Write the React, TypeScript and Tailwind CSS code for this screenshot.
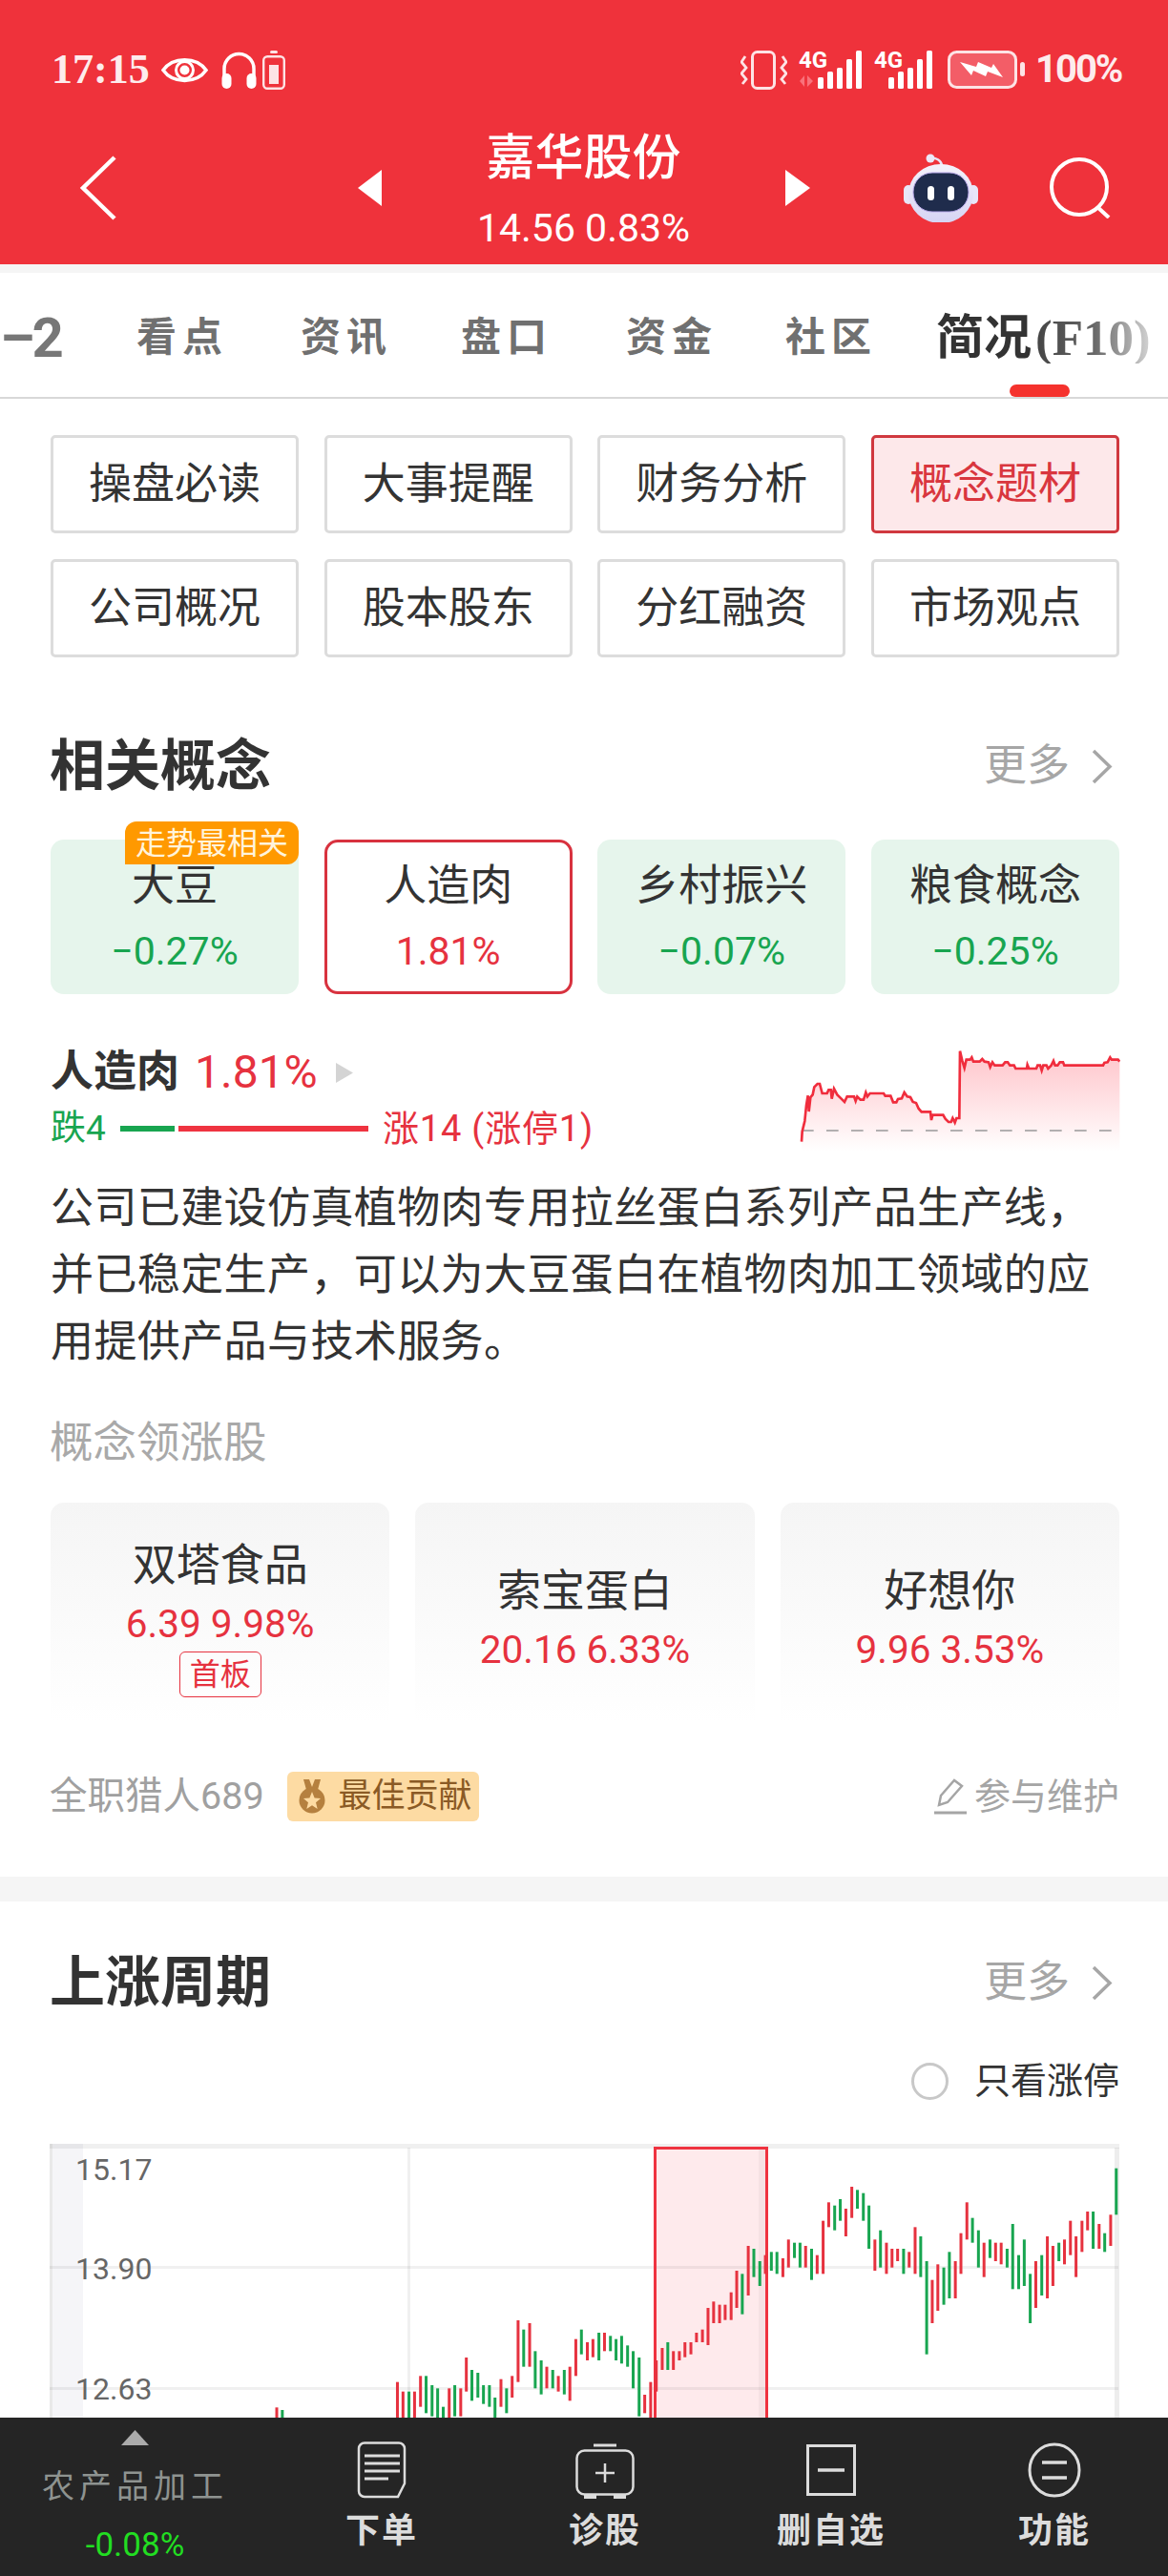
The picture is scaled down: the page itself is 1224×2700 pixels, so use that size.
const navTabs = [
  { label: '看点', gap: 'ml-[81px]' },
  { label: '资讯', gap: 'ml-[82px]' },
  { label: '盘口', gap: 'ml-[78px]' },
  { label: '资金', gap: 'ml-[83px]' },
  { label: '社区', gap: 'ml-[77px]' },
]

const menuItems = ['操盘必读', '大事提醒', '财务分析', '概念题材', '公司概况', '股本股东', '分红融资', '市场观点']

const concepts = [
  { name: '大豆', value: '−0.27%', up: false, badge: true },
  { name: '人造肉', value: '1.81%', up: true, badge: false },
  { name: '乡村振兴', value: '−0.07%', up: false, badge: false },
  { name: '粮食概念', value: '−0.25%', up: false, badge: false },
]

const leaders = [
  { name: '双塔食品', value: '6.39 9.98%', tag: '首板' },
  { name: '索宝蛋白', value: '20.16 6.33%', tag: '' },
  { name: '好想你', value: '9.96 3.53%', tag: '' },
]

// sparkline points, traced at 3x
const sparkLine =
  '120,410 122,378 130,345 135,295 140,265 143,315 148,270 155,262 160,238 170,228 177,228 185,258 200,258 205,247 212,247 215,275 222,243 232,262 245,275 255,285 263,268 285,268 290,282 295,268 305,278 315,278 322,255 327,268 335,258 378,258 383,266 400,266 408,286 418,286 423,276 435,274 443,255 452,268 462,270 470,285 480,288 488,306 497,316 525,316 528,342 532,326 565,326 572,338 582,348 590,348 595,336 602,350 607,336 616,336 618,125 625,155 632,178 638,152 650,152 655,145 660,158 680,158 688,150 695,158 708,160 713,175 720,160 727,170 752,170 760,160 768,160 775,170 788,170 793,180 828,180 830,168 835,180 858,180 862,170 870,170 875,186 880,170 890,170 895,180 905,170 912,156 917,170 925,170 932,160 942,160 946,170 1068,170 1072,162 1082,160 1090,145 1095,152 1115,152 1120,158'

type Bar = [number, number, number, 'r' | 'g']

// [x, top, bottom, colour] as read off the two chart crops
const leftBars: Bar[] = [
  [743, 910, 945, 'r'], [758, 918, 945, 'g'], [1067, 830, 945, 'r'], [1082, 860, 945, 'r'], [1098, 860, 945, 'g'],
  [1113, 860, 945, 'r'], [1129, 811, 908, 'r'], [1144, 811, 928, 'g'], [1160, 840, 938, 'g'], [1175, 850, 945, 'g'],
  [1190, 908, 945, 'g'], [1206, 850, 945, 'r'], [1221, 840, 938, 'g'], [1237, 850, 938, 'r'], [1252, 753, 860, 'r'],
  [1267, 792, 889, 'g'], [1283, 801, 879, 'g'], [1298, 840, 899, 'g'], [1314, 840, 908, 'g'], [1329, 879, 945, 'g'],
  [1345, 821, 908, 'r'], [1360, 850, 928, 'g'], [1375, 811, 879, 'r'], [1391, 636, 830, 'r'], [1406, 665, 782, 'g'],
  [1422, 645, 782, 'r'], [1437, 733, 850, 'g'], [1453, 762, 869, 'g'], [1468, 782, 850, 'r'], [1484, 792, 850, 'g'],
  [1499, 811, 860, 'r'], [1515, 792, 869, 'g'], [1530, 782, 889, 'r'], [1546, 695, 811, 'r'], [1561, 665, 743, 'g'],
]

const rightBars: Bar[] = [
  [9, 705, 762, 'r'], [24, 695, 752, 'r'], [40, 675, 762, 'g'], [55, 675, 733, 'r'], [71, 685, 733, 'g'],
  [86, 695, 762, 'g'], [101, 685, 772, 'g'], [117, 715, 782, 'g'], [132, 733, 850, 'g'], [148, 753, 938, 'g'],
  [163, 870, 928, 'r'], [179, 830, 945, 'r'], [194, 762, 860, 'r'], [210, 723, 792, 'r'], [225, 705, 792, 'g'],
  [240, 733, 792, 'r'], [256, 733, 762, 'r'], [271, 705, 752, 'r'], [287, 705, 743, 'r'], [302, 675, 705, 'r'],
  [318, 665, 705, 'r'], [333, 597, 714, 'r'], [348, 577, 645, 'r'], [364, 587, 645, 'r'], [379, 587, 635, 'r'],
  [395, 548, 635, 'r'], [410, 480, 597, 'r'], [425, 490, 617, 'g'], [441, 402, 558, 'r'], [456, 411, 500, 'g'],
  [472, 450, 528, 'g'], [487, 431, 490, 'r'], [503, 421, 480, 'g'], [518, 421, 490, 'g'], [534, 441, 500, 'r'],
  [549, 382, 470, 'r'], [565, 392, 440, 'g'], [580, 392, 470, 'g'], [595, 402, 470, 'r'], [611, 411, 509, 'g'],
  [626, 431, 490, 'r'], [642, 323, 490, 'r'], [657, 265, 343, 'r'], [673, 275, 353, 'g'], [688, 255, 323, 'g'],
  [703, 285, 372, 'r'], [719, 216, 314, 'r'], [734, 226, 285, 'g'], [750, 236, 323, 'g'], [765, 275, 411, 'g'],
  [781, 382, 480, 'r'], [796, 353, 470, 'g'], [812, 392, 490, 'r'], [827, 411, 470, 'r'], [842, 411, 450, 'r'],
  [858, 411, 490, 'g'], [873, 421, 470, 'r'], [889, 343, 490, 'r'], [904, 372, 500, 'g'], [920, 450, 743, 'g'],
  [935, 509, 645, 'r'], [950, 460, 606, 'r'], [966, 470, 587, 'g'], [981, 421, 567, 'g'], [997, 450, 567, 'r'],
  [1012, 362, 490, 'r'], [1028, 265, 382, 'r'], [1043, 314, 392, 'g'], [1059, 353, 470, 'g'], [1074, 392, 500, 'r'],
  [1090, 382, 440, 'g'], [1105, 392, 450, 'r'], [1120, 392, 460, 'r'], [1136, 411, 470, 'g'], [1151, 333, 538, 'g'],
  [1167, 431, 538, 'g'], [1182, 382, 528, 'g'], [1198, 490, 645, 'g'], [1213, 450, 597, 'r'], [1229, 431, 558, 'g'],
  [1244, 372, 567, 'r'], [1259, 402, 528, 'r'], [1275, 392, 450, 'g'], [1290, 382, 460, 'r'], [1306, 323, 431, 'r'],
  [1321, 372, 500, 'r'], [1337, 323, 421, 'r'], [1352, 294, 353, 'r'], [1367, 294, 411, 'g'], [1383, 333, 411, 'r'],
  [1398, 362, 421, 'g'], [1414, 304, 402, 'r'], [1429, 158, 304, 'g'],
]

function StatusLeftIcons() {
  return (
    <>
      <svg width="49" height="31" viewBox="0 0 49 31" className="ml-[14px]" fill="none">
        <path d="M2 15.5C12 1 37 1 47 15.5C37 30 12 30 2 15.5Z" stroke="#fff" strokeWidth="3.5" />
        <circle cx="24.5" cy="15.5" r="9" stroke="#fff" strokeWidth="3" />
        <circle cx="24.5" cy="15.5" r="5" fill="#fff" />
      </svg>
      <svg width="37" height="39" viewBox="0 0 37 39" className="ml-[14px]" fill="none">
        <path d="M3 27V18a15.5 15.5 0 0 1 31 0V27" stroke="#fff" strokeWidth="3.5" />
        <rect x="0.5" y="23" width="10" height="16" rx="5" fill="#fff" />
        <rect x="26.5" y="23" width="10" height="16" rx="5" fill="#fff" />
      </svg>
      <svg width="24" height="41" viewBox="0 0 24 41" className="ml-[6px]" fill="none">
        <rect x="8" y="0" width="8" height="3" rx="1.5" fill="#fde3e5" />
        <rect x="1.2" y="6.2" width="21.6" height="33.6" rx="4" stroke="#fde3e5" strokeWidth="2.4" />
        <rect x="7" y="15" width="10" height="20" fill="#fde3e5" />
      </svg>
    </>
  )
}

function CellSignal({ offset, arrows }: { offset: number; arrows: boolean }) {
  const tops = [28, 22, 18, 9, 0]
  return (
    <div className="relative h-[41px]" style={{ width: offset + 46 }}>
      <span className="absolute top-[-3px] left-0 text-[24px] leading-[26px] font-bold text-white">4G</span>
      <svg width={offset + 46} height="41" viewBox={`0 0 ${offset + 46} 41`} className="block">
        {arrows && <path d="M1 32L6 26V38ZM9 26L15 32L9 38Z" fill="#f9727b" />}
        {tops.map((t, i) => (
          <rect key={i} x={offset + 10 * i} y={t} width="6" height={40 - t} rx="1.5" fill="#fff" />
        ))}
      </svg>
    </div>
  )
}

function StatusRightIcons() {
  return (
    <>
      <svg width="49" height="41" viewBox="0 0 49 41" fill="none">
        <rect x="12.5" y="1.5" width="23" height="38" rx="5" stroke="#fde3e5" strokeWidth="3" />
        <path d="M5 6L1 12L6 18L1 24L6 30L2 35" stroke="#fde3e5" strokeWidth="2.8" />
        <path d="M44 6L48 12L43 18L48 24L43 30L47 35" stroke="#fde3e5" strokeWidth="2.8" />
      </svg>
      <div className="ml-[12px] flex">
        <CellSignal offset={20} arrows />
      </div>
      <div className="ml-[13px] flex">
        <CellSignal offset={15} arrows={false} />
      </div>
      <svg width="81" height="40" viewBox="0 0 81 40" className="ml-[16px]" fill="none">
        <rect x="1.5" y="1.5" width="70" height="37" rx="8" fill="#f35d67" stroke="#fde3e5" strokeWidth="3" />
        <path d="M13 12L30 17L32 12L46 18L48 14L58 28L42 22L40 27L27 21L25 26Z" fill="#fff" />
        <rect x="76" y="12" width="5" height="15" rx="2.5" fill="#fde3e5" />
      </svg>
      <span className="ml-[11px] w-[90px] text-[40px] leading-[42px] font-bold tracking-[-2px] whitespace-nowrap text-[#fdeced]">
        100%
      </span>
    </>
  )
}

function RobotIcon() {
  return (
    <svg width="78" height="72" viewBox="0 0 78 72">
      <defs>
        <linearGradient id="shell" x1="0" y1="0" x2="0" y2="1">
          <stop offset="0" stopColor="#f4f2fb" />
          <stop offset="1" stopColor="#d6d4f4" />
        </linearGradient>
      </defs>
      <path d="M28 5C34 4 39 7 40 12" stroke="#e9e4f6" strokeWidth="2.5" fill="none" />
      <circle cx="28" cy="5" r="4.5" fill="#ece8f8" />
      <rect x="0" y="33" width="10" height="20" rx="5" fill="#e8e6f8" />
      <rect x="68" y="33" width="10" height="20" rx="5" fill="#e8e6f8" />
      <ellipse cx="39" cy="42" rx="34" ry="31" fill="url(#shell)" />
      <rect x="10" y="20" width="58" height="41" rx="20" fill="#1f2c4c" stroke="#b9a9ea" strokeWidth="1" />
      <rect x="25" y="34" width="7" height="15" rx="3.5" fill="#fff" />
      <rect x="46" y="34" width="7" height="15" rx="3.5" fill="#fff" />
    </svg>
  )
}

function SectionHead({ title }: { title: string }) {
  return (
    <div className="flex h-[70px] items-center justify-between pr-[51px] pl-[52px]">
      <span className="text-[58px] leading-[70px] font-bold text-[#333]">{title}</span>
      <span className="flex items-center text-[45px] text-[#a6a6a6]">
        更多
        <svg width="22" height="37" viewBox="0 0 22 37" className="mr-[7px] ml-[23px]" fill="none">
          <path d="M2 2L19 18.5L2 35" stroke="#a6a6a6" strokeWidth="3.5" />
        </svg>
      </span>
    </div>
  )
}

function CandleChart() {
  const toY = (y: number) => 2220 + y / 3 - 2247
  return (
    <svg width="1224" height="287" viewBox="0 0 1224 287" className="block font-['Roboto',sans-serif]">
      <rect x="52" y="0" width="35" height="287" fill="#f5f5f8" />
      <rect x="52" y="0" width="3" height="287" fill="#e9e9e9" />
      <rect x="685" y="3" width="120" height="284" fill="#feeaec" />
      <rect x="795" y="3" width="8" height="284" fill="#000" opacity="0.03" />
      <rect x="52" y="0" width="1121" height="5" fill="#000" opacity="0.06" />
      <rect x="52" y="128" width="1120" height="3" fill="#000" opacity="0.06" />
      <rect x="52" y="255" width="1120" height="3" fill="#000" opacity="0.06" />
      <rect x="427" y="4" width="3" height="283" fill="#000" opacity="0.06" />
      <rect x="1168" y="4" width="5" height="283" fill="#000" opacity="0.07" />
      <path d="M686.5 287V4.5H803.5V287" stroke="#ef3340" strokeWidth="3" fill="none" />
      {leftBars.map(([x, t, b, c]) => (
        <rect key={`l${x}`} x={x / 2.562 - 1.5} y={toY(t)} width="3" height={(b - t) / 3} fill={c === 'r' ? '#e6323f' : '#18a550'} />
      ))}
      {rightBars.map(([x, t, b, c]) => (
        <rect key={`r${x}`} x={612 + x / 2.562 - 1.5} y={toY(t)} width="3" height={(b - t) / 3} fill={c === 'r' ? '#e6323f' : '#18a550'} />
      ))}
      <text x="79" y="38" fontSize="32" fill="#666">15.17</text>
      <text x="79" y="142" fontSize="32" fill="#666">13.90</text>
      <text x="79" y="268" fontSize="32" fill="#666">12.63</text>
    </svg>
  )
}

export default function App() {
  return (
    <div className="flex h-[2700px] w-[1224px] flex-col overflow-hidden bg-white font-['Roboto','Noto_Sans_CJK_SC',sans-serif] text-[#333]">
      <header className="h-[277px] shrink-0 bg-[#ef323b]">
        <div className="flex h-[130px] items-start justify-between pt-[52px] pr-[49px] pl-[54px]">
          <div className="flex h-[42px] items-center">
            <span className="w-[101px] font-['Liberation_Serif',serif] text-[44px] leading-[42px] font-bold text-[#fdeced]">
              17:15
            </span>
            <StatusLeftIcons />
          </div>
          <div className="flex h-[42px] items-center">
            <StatusRightIcons />
          </div>
        </div>
        <div className="flex h-[147px] items-center pb-[14px] pl-[83px]">
          <svg width="39" height="68" viewBox="0 0 39 68" fill="none">
            <path d="M37 2L4 34L37 66" stroke="#fff" strokeWidth="4.5" />
          </svg>
          <svg width="25" height="38" viewBox="0 0 25 38" className="ml-[253px]">
            <polygon points="25,0 25,38 0,19" fill="#fff" />
          </svg>
          <div className="mt-[6px] flex w-[423px] flex-col items-center self-start text-white">
            <span className="text-[51px] leading-[60px] font-medium">嘉华股份</span>
            <span className="mt-[18px] text-[41px] leading-[50px]">14.56 0.83%</span>
          </div>
          <svg width="26" height="38" viewBox="0 0 26 38">
            <polygon points="0,0 0,38 26,19" fill="#fff" />
          </svg>
          <div className="ml-[98px] flex">
            <RobotIcon />
          </div>
          <svg width="64" height="64" viewBox="0 0 64 64" className="ml-[75px]" fill="none">
            <circle cx="31" cy="31" r="29" stroke="#fff" strokeWidth="4" />
            <path d="M50 52L62 63" stroke="#fff" strokeWidth="4" />
          </svg>
        </div>
      </header>

      <div className="h-[9px] shrink-0 bg-[#f5f5f5]" />

      <nav className="relative flex h-[132px] shrink-0 items-center overflow-hidden border-b-2 border-[#d8d8d8] pt-[6px]">
        <span className="w-[62px] shrink-0 text-right text-[58px] leading-none font-bold tracking-[-3px] whitespace-nowrap text-[#777]">
          –2
        </span>
        {navTabs.map((t) => (
          <span key={t.label} className={`${t.gap} w-[90px] shrink-0 text-[42px] leading-none font-bold tracking-[6px] whitespace-nowrap text-[#707070]`}>
            {t.label}
          </span>
        ))}
        <span className="ml-[68px] shrink-0 text-[50px] leading-none font-bold whitespace-nowrap text-[#333]">简况</span>
        <span className="ml-[4px] shrink-0 bg-linear-to-r from-[#444] via-[#666] to-[#d5d5d5] bg-clip-text font-['Liberation_Serif',serif] text-[53px] leading-none font-bold whitespace-nowrap text-transparent">
          (F10)
        </span>
        <span className="absolute bottom-0 left-[1058px] h-[13px] w-[63px] rounded-t-[7px] rounded-b-[6px] bg-[#f5322d]" />
      </nav>

      <div className="mt-[38px] grid grid-cols-4 gap-x-[26.67px] gap-y-[27px] pr-[51px] pl-[53px]">
        {menuItems.map((item) => (
          <div
            key={item}
            className={
              item === '概念题材'
                ? 'flex h-[103px] items-center justify-center rounded-[5px] border-[3px] border-[#d0383f] bg-[#fde8ea] text-[45px] text-[#d9363e]'
                : 'flex h-[103px] items-center justify-center rounded-[5px] border-[3px] border-[#dcdcdc] text-[45px] text-[#333]'
            }
          >
            {item}
          </div>
        ))}
      </div>

      <div className="mt-[79px]">
        <SectionHead title="相关概念" />
      </div>

      <div className="mt-[42px] grid grid-cols-4 gap-x-[26.67px] pr-[51px] pl-[53px]">
        {concepts.map((c) => (
          <div
            key={c.name}
            className={
              c.up
                ? 'relative flex h-[162px] flex-col items-center rounded-[14px] border-[3px] border-[#d8323f] bg-white pt-[21px]'
                : 'relative flex h-[162px] flex-col items-center rounded-[14px] bg-[#e6f5ec] pt-[24px]'
            }
          >
            <span className="text-[45px] leading-[50px] text-[#333]">{c.name}</span>
            <span className={c.up ? 'mt-[18px] text-[41px] leading-[50px] text-[#e6323f]' : 'mt-[18px] text-[41px] leading-[50px] text-[#18a550]'}>
              {c.value}
            </span>
            {c.badge && (
              <span className="absolute top-[-19px] right-0 flex h-[45px] w-[182px] items-center justify-center rounded-tl-[12px] rounded-tr-[12px] rounded-br-[12px] bg-[#ff9900] text-[32px] whitespace-nowrap text-[#fff4dc]">
                走势最相关
              </span>
            )}
          </div>
        ))}
      </div>

      <div className="mt-[50px] flex h-[116px] items-start justify-between pl-[53px]">
        <div className="flex flex-col pt-[2px]">
          <div className="flex h-[60px] items-center">
            <span className="text-[45px] font-bold whitespace-nowrap text-[#333]">人造肉</span>
            <span className="ml-[16px] text-[48px] text-[#e6323f]">1.81%</span>
            <svg width="18" height="21" viewBox="0 0 18 21" className="ml-[19px]">
              <polygon points="0,0 18,10.5 0,21" fill="#d4d4d4" />
            </svg>
          </div>
          <div className="mt-[1px] flex h-[56px] items-center">
            <span className="w-[60px] text-[37px] whitespace-nowrap text-[#18a550]">跌4</span>
            <span className="ml-[13px] h-[6px] w-[57px] bg-[#18a550]" />
            <span className="ml-[4px] h-[6px] w-[199px] bg-[#ef3340]" />
            <span className="ml-[15px] text-[38px] tracking-[0.8px] whitespace-nowrap text-[#e6323f]">涨14 (涨停1)</span>
          </div>
        </div>
        <svg width="336" height="116" viewBox="114 96 1008 348" className="mr-[50px] shrink-0">
          <defs>
            <linearGradient id="sparkFill" x1="0" y1="0" x2="0" y2="1">
              <stop offset="0" stopColor="#ffc4ca" />
              <stop offset="1" stopColor="#ffffff" />
            </linearGradient>
          </defs>
          <polygon points={`120,440 ${sparkLine} 1120,440`} fill="url(#sparkFill)" />
          <line x1="120" y1="375" x2="1095" y2="375" stroke="#999" strokeWidth="5" strokeDasharray="38 40" />
          <polyline points={sparkLine} fill="none" stroke="#f02d3d" strokeWidth="8" />
        </svg>
      </div>

      <p className="mt-[24px] pl-[53px] text-[45px] leading-[70px] tracking-[0.4px] whitespace-nowrap text-[#333]">
        公司已建设仿真植物肉专用拉丝蛋白系列产品生产线，
        <br />
        并已稳定生产，可以为大豆蛋白在植物肉加工领域的应
        <br />
        用提供产品与技术服务。
      </p>

      <div className="mt-[41px] pl-[52px] text-[45.5px] leading-[60px] text-[#a9a9a9]">概念领涨股</div>

      <div className="mt-[32px] grid grid-cols-3 gap-x-[27px] pr-[51px] pl-[53px]">
        {leaders.map((l) => (
          <div
            key={l.name}
            className={
              l.tag
                ? 'flex h-[230px] flex-col items-center rounded-t-[14px] bg-linear-to-b from-[#f5f5f5] to-white pt-[40px]'
                : 'flex h-[230px] flex-col items-center rounded-t-[14px] bg-linear-to-b from-[#f5f5f5] to-white pt-[67px]'
            }
          >
            <span className="text-[46px] leading-[50px] text-[#333]">{l.name}</span>
            <span className="mt-[12px] text-[40.5px] leading-[50px] text-[#e6323f]">{l.value}</span>
            {l.tag && (
              <span className="mt-[4px] flex h-[48px] w-[86px] items-center justify-center rounded-[6px] border border-[#e6323f] text-[32px] text-[#e6323f]">
                {l.tag}
              </span>
            )}
          </div>
        ))}
      </div>

      <div className="mt-[52px] flex h-[52px] items-center justify-between pr-[51px] pl-[52px]">
        <div className="flex items-center">
          <span className="text-[39.5px] whitespace-nowrap text-[#a0a0a0]">全职猎人689</span>
          <span className="ml-[24px] flex h-[52px] w-[201px] items-center rounded-[6px] bg-[#fddba3] pl-[11px]">
            <svg width="30" height="36" viewBox="0 0 30 36">
              <path d="M6 0H12L15 8L18 0H24L21 11H9Z" fill="#b5803f" />
              <circle cx="15" cy="22" r="13.5" fill="#b5803f" />
              <polygon points="15,13 17.6,19.5 24,20 19,24.2 20.7,31 15,27.3 9.3,31 11,24.2 6,20 12.4,19.5" fill="#fddba3" />
            </svg>
            <span className="ml-[13px] text-[35px] whitespace-nowrap text-[#8a5a25]">最佳贡献</span>
          </span>
        </div>
        <div className="flex items-center">
          <svg width="36" height="38" viewBox="0 0 36 38" fill="none">
            <path d="M6 28L8 18L22 2L30 8L15 25Z" stroke="#a5a5a5" strokeWidth="2.5" />
            <path d="M1 36H35" stroke="#a5a5a5" strokeWidth="3" />
          </svg>
          <span className="ml-[7px] text-[38px] whitespace-nowrap text-[#a5a5a5]">参与维护</span>
        </div>
      </div>

      <div className="mt-[58px] h-[26px] shrink-0 bg-[#f5f5f5]" />

      <div className="mt-[50px]">
        <SectionHead title="上涨周期" />
      </div>

      <div className="mt-[48px] flex h-[40px] items-center justify-end pr-[51px]">
        <span className="h-[39px] w-[39px] rounded-full border-[3px] border-[#c8c8c8]" />
        <span className="ml-[27px] text-[38px] leading-[40px] text-[#333]">只看涨停</span>
      </div>

      <div className="mt-[46px] h-[287px] shrink-0 overflow-hidden">
        <CandleChart />
      </div>

      <footer className="flex h-[166px] shrink-0 bg-[#252525]">
        <div className="flex w-[283px] flex-col items-center pt-[13px]">
          <svg width="29" height="16" viewBox="0 0 29 16">
            <polygon points="14.5,0 29,16 0,16" fill="#ababab" />
          </svg>
          <span className="mt-[18px] text-[34px] leading-[50px] tracking-[5px] whitespace-nowrap text-[#8e9390]">农产品加工</span>
          <span className="mt-[12px] text-[35px] leading-[50px] text-[#22dd22]">-0.08%</span>
        </div>

        <div className="flex w-[234px] flex-col items-center pt-[25px]">
          <svg width="52" height="60" viewBox="0 0 52 60" fill="none" stroke="#dcdcdc">
            <path d="M8 1.5H44A6 6 0 0 1 50 7.5V44L43 58H8A6 6 0 0 1 2 52V7.5A6 6 0 0 1 8 1.5Z" strokeWidth="2.5" />
            <path d="M8 15H45M8 23H45M8 31H45M8 39H33" strokeWidth="3" />
          </svg>
          <span className="mt-[9px] text-[36px] leading-[50px] font-bold tracking-[2px] text-[#dcdcdc]">下单</span>
        </div>

        <div className="flex w-[234px] flex-col items-center pt-[25px]">
          <svg width="62" height="60" viewBox="0 0 62 60" fill="none" stroke="#dcdcdc">
            <path d="M19 4H43" strokeWidth="3" />
            <rect x="1.5" y="9.5" width="59" height="46" rx="8" strokeWidth="2.5" />
            <path d="M9 58H22M40 58H53" strokeWidth="4" />
            <path d="M21 33H41M31 23V43" strokeWidth="2.5" />
          </svg>
          <span className="mt-[9px] text-[36px] leading-[50px] font-bold tracking-[2px] text-[#dcdcdc]">诊股</span>
        </div>

        <div className="flex w-[240px] flex-col items-center pt-[25px]">
          <svg width="52" height="60" viewBox="0 0 52 60" fill="none" stroke="#dcdcdc">
            <rect x="1.5" y="4.5" width="49" height="51" strokeWidth="3" />
            <path d="M12 30H40" strokeWidth="3.5" />
          </svg>
          <span className="mt-[9px] text-[36px] leading-[50px] font-bold tracking-[2px] text-[#dcdcdc]">删自选</span>
        </div>

        <div className="flex w-[228px] flex-col items-center pt-[25px]">
          <svg width="56" height="60" viewBox="0 0 56 60" fill="none" stroke="#dcdcdc">
            <ellipse cx="28" cy="30" rx="26" ry="27" strokeWidth="3" />
            <path d="M15 22H41M15 38H41" strokeWidth="3.5" />
          </svg>
          <span className="mt-[9px] text-[36px] leading-[50px] font-bold tracking-[2px] text-[#dcdcdc]">功能</span>
        </div>
      </footer>
    </div>
  )
}
